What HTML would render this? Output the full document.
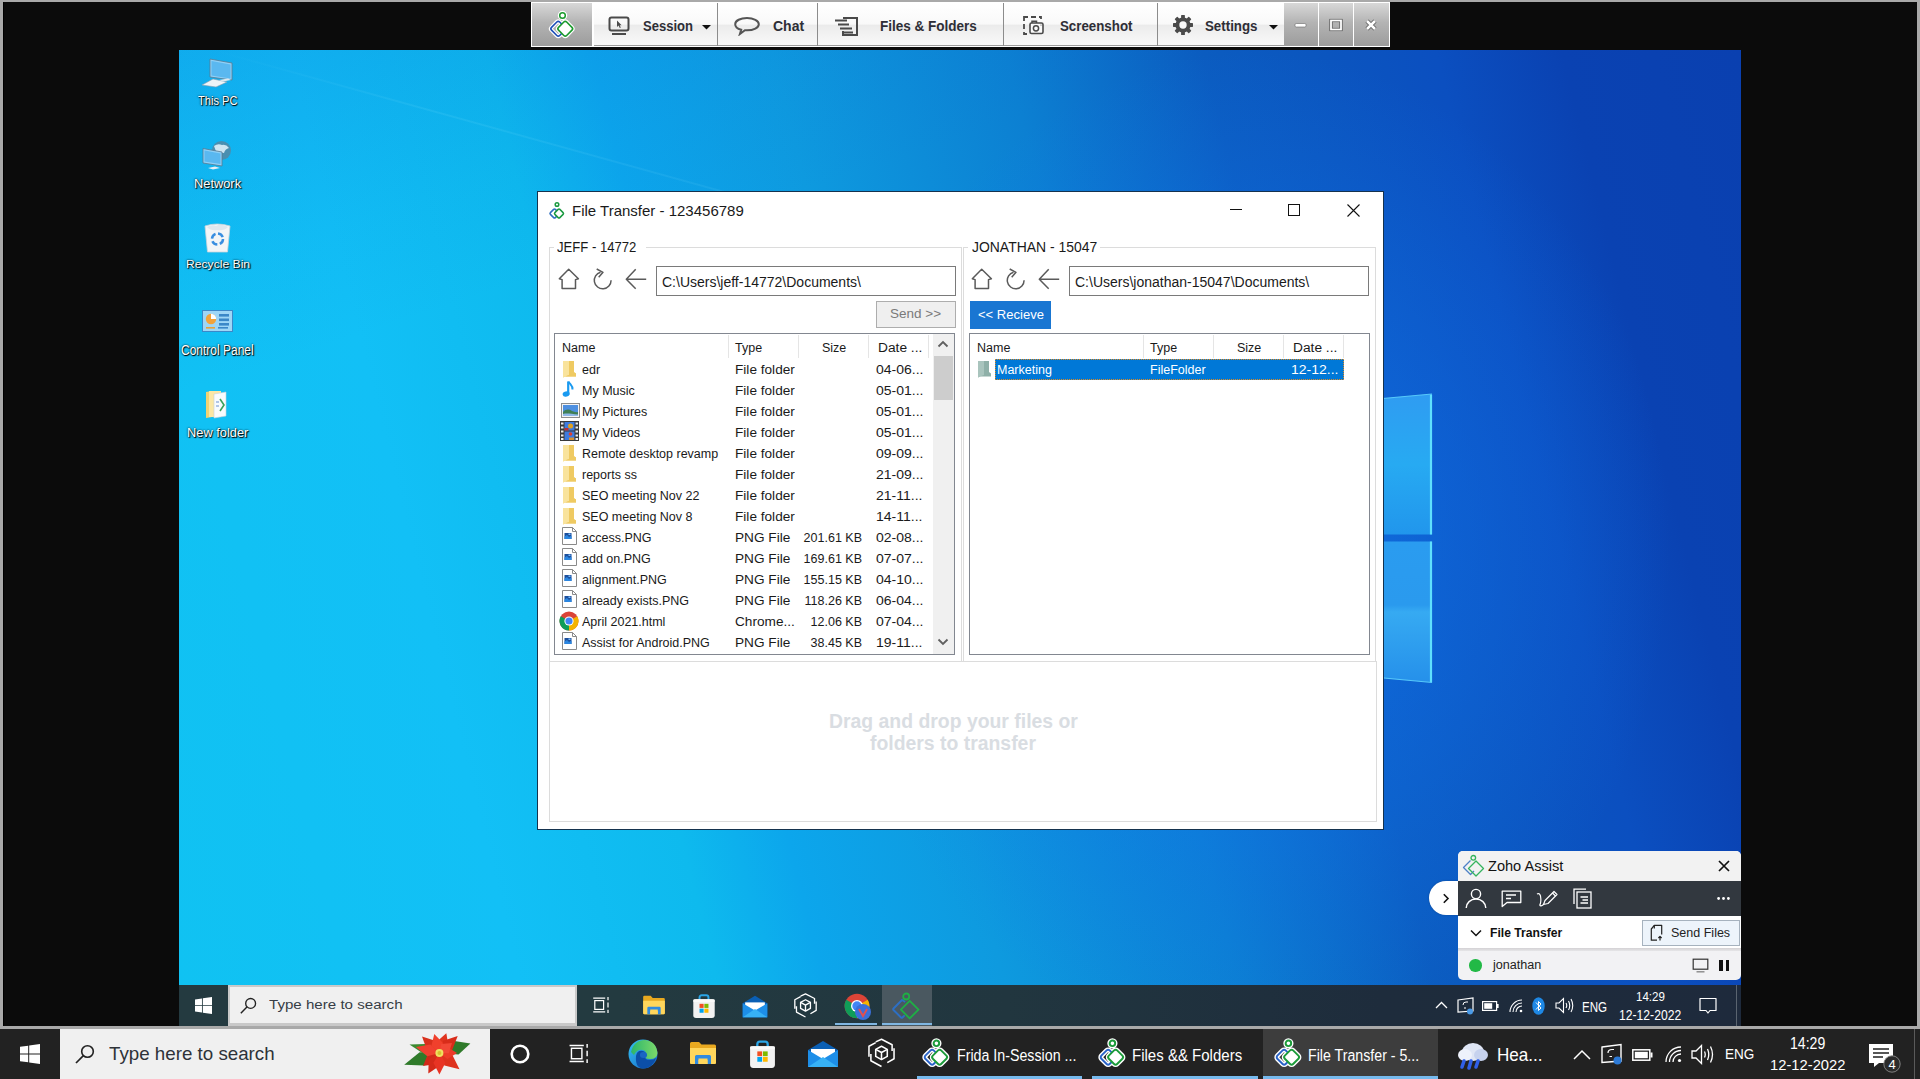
<!DOCTYPE html>
<html><head><meta charset="utf-8">
<style>
*{margin:0;padding:0;box-sizing:border-box}
html,body{width:1920px;height:1079px;overflow:hidden;background:#0b0b0b;font-family:"Liberation Sans",sans-serif}
.a{position:absolute}
.t{position:absolute;white-space:nowrap;line-height:1}
#frameT{left:0;top:0;width:1920px;height:2px;background:#a9a9a9}
#frameL{left:0;top:0;width:3px;height:1029px;background:#a9a9a9}
#frameR{left:1917px;top:0;width:3px;height:1029px;background:#a9a9a9}
#frameB{left:0;top:1026px;width:1920px;height:3px;background:#a9a9a9}
#desk{left:179px;top:50px;width:1562px;height:935px;overflow:hidden;
 background:linear-gradient(76deg,#10c2f2 0%,#12c0f6 19%,#0ebaee 30%,#0ca6ec 36%,#0e9adf 46%,#0c80d2 59%,#0b5cc0 70%,#0b56bf 76%,#0b4fc0 83%,#0a42b2 90%,#0a40b0 100%)}
</style></head>
<body>
<div class="a" id="frameT"></div>
<div class="a" id="frameL"></div>
<div class="a" id="frameR"></div>
<div class="a" style="left:3px;top:2px;width:1px;height:1024px;background:#000"></div>
<div class="a" id="frameB"></div>

<div class="a" id="desk">
<!--DESK-->
<!-- top-left sky darkening above light ray -->
<div class="a" style="left:0;top:0;width:1562px;height:935px;background:linear-gradient(162deg, rgba(12,110,215,0.25) 0%, rgba(12,110,215,0.06) 16%, rgba(12,110,215,0) 24%)"></div>
<!-- light ray -->
<div class="a" style="left:30px;top:-2px;width:760px;height:2px;background:linear-gradient(90deg,rgba(150,235,255,0) 0%,rgba(150,235,255,0.10) 30%,rgba(150,235,255,0.08) 75%,rgba(150,235,255,0) 100%);transform:rotate(15.5deg);transform-origin:0 0"></div>
<!-- logo glow -->
<div class="a" style="left:0;top:0;width:1562px;height:935px;background:radial-gradient(ellipse 420px 500px at 1071px 500px, rgba(22,128,245,0.7) 0%, rgba(18,115,240,0.4) 45%, rgba(14,100,230,0) 100%)"></div>
<!-- windows logo panes (right edges visible) -->
<svg class="a" style="left:970px;top:280px" width="320" height="380" viewBox="0 0 320 380">
 <defs>
  <linearGradient id="pane1" x1="0" y1="0" x2="0" y2="1"><stop offset="0" stop-color="#2f9cf2"/><stop offset="0.5" stop-color="#27aaf2"/><stop offset="1" stop-color="#2196ec"/></linearGradient>
  <linearGradient id="pane2" x1="0" y1="0" x2="0" y2="1"><stop offset="0" stop-color="#2a9cf0"/><stop offset="0.45" stop-color="#2a9aee"/><stop offset="0.5" stop-color="#36aaf2"/><stop offset="1" stop-color="#2590ea"/></linearGradient>
 </defs>
 <path d="M0 90L283 64V204.5H0Z" fill="url(#pane1)"/>
 <path d="M0 211.5H283V352.5L0 326Z" fill="url(#pane2)"/>
 <path d="M282 64.5V204.5M282 211.5V352.5" stroke="#5fe0fd" stroke-width="2.2"/>
 <path d="M0 90L283 64" stroke="#56c8fa" stroke-width="1.2"/>
 <path d="M0 326L283 352.5" stroke="#56c8fa" stroke-width="1.2"/>
</svg>
<!-- desktop icons -->
<svg class="a" style="left:22px;top:8px" width="33" height="30" viewBox="0 0 33 30">
 <path d="M9 1L31 5V22L9 19Z" fill="#8fd0f7" stroke="#5a7a90" stroke-width="0.8"/>
 <path d="M10.5 3L29.5 6.5V20.5L10.5 17.5Z" fill="#5ab8f0"/>
 <path d="M1 27L12 21L26 24L15 29Z" fill="#eef4f8" stroke="#8aa0b0" stroke-width="0.6"/>
 <path d="M18 22L27 20.5L30 22L22 23.5Z" fill="#dde8ef"/>
</svg>
<div class="t" id="dpc" style="left:18.5px;top:44.6px;font-size:12.51px;color:#fff;text-shadow:0 0 2px #000,1px 1px 1px #000;transform:scaleX(0.888);transform-origin:0 0">This PC</div>
<svg class="a" style="left:23px;top:90px" width="30" height="30" viewBox="0 0 30 30">
 <circle cx="19.5" cy="10.5" r="9.5" fill="#4a8fb0"/><path d="M12 6Q16 3 20 5Q24 4 27 8Q23 9 22 13Q18 12 15 14Z" fill="#cfe6f2"/>
 <path d="M1 8.5L20 12V26L1 23Z" fill="#8fd0f7" stroke="#5a7a90" stroke-width="0.8"/><path d="M2.5 10.5L18.5 13.5V24L2.5 21.5Z" fill="#5ab8f0"/>
 <path d="M6 28L13 26.5L18 28L11 29.5Z" fill="#e6eef3"/>
</svg>
<div class="t" id="dnet" style="left:15.0px;top:127.8px;font-size:12.31px;color:#fff;text-shadow:0 0 2px #000,1px 1px 1px #000;transform:scaleX(1.043);transform-origin:0 0">Network</div>
<svg class="a" style="left:25px;top:172px" width="27" height="31" viewBox="0 0 27 31">
 <path d="M1 4Q13 0 26 4L23.5 30H3.5Z" fill="#f3f5f7" stroke="#c9d3da" stroke-width="0.8"/>
 <path d="M3 5Q8 2 12 4Q17 1 24 5Q20 9 13 8Q7 9 3 5Z" fill="#dfe7ee"/>
 <circle cx="13.5" cy="17" r="5.5" fill="none" stroke="#3a8ee0" stroke-width="2.5" stroke-dasharray="6 2.6"/>
</svg>
<div class="t" id="drb" style="left:7.3px;top:209.4px;font-size:11.15px;color:#fff;text-shadow:0 0 2px #000,1px 1px 1px #000;transform:scaleX(1.09);transform-origin:0 0">Recycle Bin</div>
<svg class="a" style="left:23px;top:260px" width="31" height="22" viewBox="0 0 31 22">
 <rect x="0.5" y="0.5" width="30" height="21" fill="#9ed6f6" stroke="#3b88c8" stroke-width="1"/>
 <circle cx="9" cy="9" r="5.2" fill="#f2a33a"/><path d="M9 9V3.8A5.2 5.2 0 0 1 14.2 9Z" fill="#fff"/>
 <rect x="17" y="4" width="10" height="2.6" fill="#3b88c8"/><rect x="17" y="8.5" width="10" height="2.6" fill="#3b88c8"/><rect x="17" y="13" width="10" height="2.6" fill="#3b88c8"/>
 <rect x="4" y="17" width="9" height="1.6" fill="#e7a23a"/><rect x="16" y="17" width="10" height="1.6" fill="#3b88c8"/>
</svg>
<div class="t" id="dcp" style="left:1.8px;top:294.0px;font-size:13.95px;color:#fff;text-shadow:0 0 2px #000,1px 1px 1px #000;transform:scaleX(0.861);transform-origin:0 0">Control Panel</div>
<svg class="a" style="left:26px;top:340px" width="24" height="29" viewBox="0 0 24 29">
 <path d="M1 2L7 1V27L1 28Z" fill="#f2d373"/><path d="M4 1H16V27H4Z" fill="#fbe7a4"/>
 <path d="M9 4L21 2V26L9 28Z" fill="#f8fbfd" stroke="#c8d0d8" stroke-width="0.6"/>
 <path d="M15 9L19 15L15 21" fill="none" stroke="#3aa05a" stroke-width="1.6"/><path d="M11 12H14M11 16H14" stroke="#6a8fd0" stroke-width="1"/>
</svg>
<div class="t" id="dnf" style="left:7.5px;top:375.6px;font-size:13.52px;color:#fff;text-shadow:0 0 2px #000,1px 1px 1px #000;transform:scaleX(0.949);transform-origin:0 0">New folder</div>
<!--/DESK-->
</div>


<div class="a" style="left:531px;top:2px;width:859px;height:45px;background:#fff"></div>
<div class="a" style="left:532px;top:3px;width:60px;height:43px;background:linear-gradient(180deg,#d8d8d8 0%,#b4b4b4 45%,#9c9c9c 100%)"></div>
<div class="a" style="left:594px;top:3px;width:690px;height:43px;border-bottom:1px solid #9c9c9c;background:linear-gradient(180deg,#ffffff 0%,#f9f9f9 50%,#ebebeb 53%,#f2f2f2 75%,#f8f8f8 100%)"></div>
<div class="a" style="left:717px;top:3px;width:1px;height:43px;background:#8c8c8c"></div>
<div class="a" style="left:817px;top:3px;width:1px;height:43px;background:#8c8c8c"></div>
<div class="a" style="left:1003px;top:3px;width:1px;height:43px;background:#8c8c8c"></div>
<div class="a" style="left:1157px;top:3px;width:1px;height:43px;background:#8c8c8c"></div>
<div class="a" style="left:1284px;top:3px;width:34px;height:43px;background:linear-gradient(180deg,#d8d8d8 0%,#b4b4b4 45%,#9c9c9c 100%)"></div>
<div class="a" style="left:1319px;top:3px;width:34px;height:43px;background:linear-gradient(180deg,#d8d8d8 0%,#b4b4b4 45%,#9c9c9c 100%)"></div>
<div class="a" style="left:1354px;top:3px;width:35px;height:43px;background:linear-gradient(180deg,#d8d8d8 0%,#b4b4b4 45%,#9c9c9c 100%)"></div>
<!-- logo -->
<svg class="a" style="left:548px;top:9px" width="30" height="32" viewBox="0 0 30 32">
 <g fill="none" stroke-linejoin="round">
  <rect x="4.5" y="14" width="11.5" height="11.5" rx="2" transform="rotate(45 10.25 19.75)" stroke="#fff" stroke-width="4"/>
  <rect x="11.5" y="14" width="11.5" height="11.5" rx="2" transform="rotate(45 17.25 19.75)" stroke="#fff" stroke-width="4"/>
  <circle cx="14.5" cy="6.5" r="3" stroke="#fff" stroke-width="3.5"/>
  <rect x="4.5" y="14" width="11.5" height="11.5" rx="2" transform="rotate(45 10.25 19.75)" stroke="#1d4fb8" stroke-width="1.6"/>
  <rect x="11.5" y="14" width="11.5" height="11.5" rx="2" transform="rotate(45 17.25 19.75)" fill="#fff" stroke="#1a9a2c" stroke-width="1.6"/>
  <circle cx="14.5" cy="6.5" r="2.8" fill="#fff" stroke="#1a9a2c" stroke-width="1.5"/>
 </g>
</svg>
<!-- session icon -->
<svg class="a" style="left:608px;top:16px" width="24" height="20" viewBox="0 0 24 20">
 <rect x="1.5" y="1.5" width="19" height="13" rx="2" fill="none" stroke="#4a4a4a" stroke-width="2"/>
 <rect x="4" y="17" width="14" height="2" fill="#4a4a4a"/>
 <path d="M9 4.5 L9 11 L10.6 9.6 L11.8 12 L12.8 11.5 L11.7 9.2 L13.6 9.2 Z" fill="#4a4a4a"/>
</svg>
<div class="t" style="left:643px;top:19px;font-size:14px;font-weight:bold;color:#2e2e36;transform:scaleX(0.93);transform-origin:0 0">Session</div>
<svg class="a" style="left:702px;top:25px" width="9" height="5" viewBox="0 0 9 5"><path d="M0 0H9L4.5 4.5Z" fill="#111"/></svg>
<!-- chat icon -->
<svg class="a" style="left:733px;top:16px" width="28" height="20" viewBox="0 0 28 20">
 <path d="M14 2C7.5 2 2.2 4.6 2.2 8.2c0 2.6 2.6 4.6 6 5.5l-1.3 4.3 5-3.8c0.7 0.1 1.4 0.1 2.1 0.1 6.5 0 11.8-2.6 11.8-6.1S20.5 2 14 2z" fill="none" stroke="#555" stroke-width="2"/>
</svg>
<div class="t" style="left:773px;top:19px;font-size:14px;font-weight:bold;color:#2e2e36">Chat</div>
<!-- files icon -->
<svg class="a" style="left:834px;top:16px" width="26" height="20" viewBox="0 0 26 20">
 <path d="M9 2H23V19H9V15" fill="none" stroke="#4a4a4a" stroke-width="2"/>
 <path d="M1 4.5H13M4 8.5H15M6 12.5H18M9 16.5H19" stroke="#4a4a4a" stroke-width="1.8"/>
</svg>
<div class="t" style="left:880px;top:19px;font-size:14px;font-weight:bold;color:#2e2e36;transform:scaleX(0.965);transform-origin:0 0">Files &amp; Folders</div>
<!-- screenshot icon -->
<svg class="a" style="left:1023px;top:16px" width="22" height="20" viewBox="0 0 22 20">
 <path d="M1 5V1H5M8 1H13M16 1H18V3M1 8V13M1 16V18H4" fill="none" stroke="#4a4a4a" stroke-width="1.8"/>
 <rect x="7" y="7" width="13" height="10.5" rx="1.5" fill="#fafafa" stroke="#4a4a4a" stroke-width="1.6"/>
 <path d="M9 7V5.2H13.5V7" fill="none" stroke="#4a4a4a" stroke-width="1.5"/>
 <circle cx="13" cy="12.3" r="2.6" fill="none" stroke="#4a4a4a" stroke-width="1.5"/>
 <circle cx="18" cy="9" r="0.6" fill="#4a4a4a"/>
</svg>
<div class="t" style="left:1060px;top:19px;font-size:14px;font-weight:bold;color:#2e2e36;transform:scaleX(0.95);transform-origin:0 0">Screenshot</div>
<!-- gear -->
<svg class="a" style="left:1172px;top:14px" width="22" height="22" viewBox="0 0 22 22">
 <g transform="translate(11 11)" fill="#4a4a4a">
  <circle r="7.6"/>
  <g id="teeth"><rect x="-1.9" y="-10" width="3.8" height="4" rx="0.6"/></g>
  <use href="#teeth" transform="rotate(45)"/><use href="#teeth" transform="rotate(90)"/><use href="#teeth" transform="rotate(135)"/>
  <use href="#teeth" transform="rotate(180)"/><use href="#teeth" transform="rotate(225)"/><use href="#teeth" transform="rotate(270)"/><use href="#teeth" transform="rotate(315)"/>
  <circle r="3.7" fill="#f8f8f8"/>
 </g>
</svg>
<div class="t" style="left:1205px;top:19px;font-size:14px;font-weight:bold;color:#2e2e36;transform:scaleX(0.95);transform-origin:0 0">Settings</div>
<svg class="a" style="left:1268.5px;top:24.5px" width="9" height="5" viewBox="0 0 9 5"><path d="M0 0H9L4.5 4.5Z" fill="#111"/></svg>
<!-- min/max/close -->
<svg class="a" style="left:1284px;top:3px" width="105" height="42" viewBox="0 0 105 42">
 <rect x="11" y="20.5" width="11" height="3.5" rx="1.2" fill="#fff" stroke="#666" stroke-width="0.6"/>
 <rect x="47" y="17.5" width="10" height="9" fill="none" stroke="#555" stroke-width="3.2"/>
 <rect x="47" y="17.5" width="10" height="9" fill="none" stroke="#fff" stroke-width="1.8"/>
 <path d="M83 18L91 26M91 18L83 26" stroke="#555" stroke-width="4.2"/>
 <path d="M83 18L91 26M91 18L83 26" stroke="#fff" stroke-width="2.6"/>
</svg>


<!--WINDOW-->
<div class="a" style="left:537px;top:191px;width:847px;height:639px;background:#fff;border:1px solid #15324e"></div>
<!-- title -->
<svg class="a" style="left:548px;top:201px" width="19" height="19" viewBox="0 0 19 19">
 <g fill="none" stroke-width="1.5">
  <rect x="3" y="9" width="7" height="7" rx="1.2" transform="rotate(45 6.5 12.5)" stroke="#2f6fc0"/>
  <rect x="7.5" y="9" width="7" height="7" rx="1.2" transform="rotate(45 11 12.5)" stroke="#1a9a40" fill="#fff"/>
  <circle cx="9" cy="3.5" r="1.8" stroke="#1a9a40"/>
 </g>
</svg>
<div class="t" style="left:572px;top:203px;font-size:15px;color:#1a1a1a">File Transfer - 123456789</div>
<div class="a" style="left:1230px;top:209px;width:12px;height:1px;background:#111"></div>
<div class="a" style="left:1288px;top:204px;width:12px;height:12px;border:1px solid #111"></div>
<svg class="a" style="left:1347px;top:204px" width="13" height="13" viewBox="0 0 13 13"><path d="M0.5 0.5L12.5 12.5M12.5 0.5L0.5 12.5" stroke="#111" stroke-width="1.1"/></svg>
<!-- group boxes -->
<div class="a" style="left:549px;top:247px;width:413px;height:415px;border:1px solid #dcdcdc"></div>
<div class="a" style="left:963px;top:247px;width:413px;height:415px;border:1px solid #dcdcdc"></div>
<div class="a" style="left:549px;top:661px;width:828px;height:161px;border:1px solid #dcdcdc"></div>
<div class="a" style="left:554px;top:240px;width:92px;height:14px;background:#fff"></div>
<div class="a" style="left:968px;top:240px;width:132px;height:14px;background:#fff"></div>
<div class="t" style="left:556.5px;top:241px;font-size:13.8px;color:#1a1a1a;transform:scaleX(0.95);transform-origin:0 0">JEFF - 14772</div>
<div class="t" style="left:972px;top:241px;font-size:13.8px;color:#1a1a1a;transform:scaleX(1.01);transform-origin:0 0">JONATHAN - 15047</div>


<svg class="a" style="left:555px;top:264px" width="95" height="30" viewBox="0 0 95 30"><g fill="none" stroke="#5a5a5a" stroke-width="1.5" stroke-linejoin="round"><path d="M7.1 24.6V15.6L4.3 14.7L13.7 5.3L23.4 14.7L20.5 15.6V24.6Z"/><path d="M56.1 16.3A8.4 8.4 0 1 1 45.5 8.2"/><path d="M41.7 5L48 8.3L43.7 13.3"/><path d="M80.7 5.2L71.3 15.2L80.7 24.7M71.5 15.2H91.2"/></g></svg>

<svg class="a" style="left:968px;top:264px" width="95" height="30" viewBox="0 0 95 30"><g fill="none" stroke="#5a5a5a" stroke-width="1.5" stroke-linejoin="round"><path d="M7.1 24.6V15.6L4.3 14.7L13.7 5.3L23.4 14.7L20.5 15.6V24.6Z"/><path d="M56.1 16.3A8.4 8.4 0 1 1 45.5 8.2"/><path d="M41.7 5L48 8.3L43.7 13.3"/><path d="M80.7 5.2L71.3 15.2L80.7 24.7M71.5 15.2H91.2"/></g></svg>

<div class="a" style="left:656px;top:266px;width:300px;height:30px;border:1px solid #7a7a7a;background:#fff"></div>
<div class="t" style="left:662px;top:275px;font-size:14px;color:#1a1a1a">C:\Users\jeff-14772\Documents\</div>
<div class="a" style="left:1069px;top:266px;width:300px;height:30px;border:1px solid #7a7a7a;background:#fff"></div>
<div class="t" style="left:1075px;top:275px;font-size:14px;color:#1a1a1a">C:\Users\jonathan-15047\Documents\</div>
<div class="a" style="left:876px;top:301px;width:80px;height:27px;border:1px solid #adadad;background:#efefef"></div>
<div class="t" style="left:890px;top:307px;font-size:13.5px;color:#7a7a7a">Send &gt;&gt;</div>
<div class="a" style="left:970px;top:301px;width:81px;height:28px;background:#1976d2"></div>
<div class="t" style="left:978px;top:307.5px;font-size:13.5px;color:#fff;transform:scaleX(0.965);transform-origin:0 0">&lt;&lt; Recieve</div>
<!-- list boxes -->
<div class="a" style="left:554px;top:333px;width:401px;height:322px;border:1px solid #828790;background:#fff"></div>
<div class="a" style="left:969px;top:333px;width:401px;height:322px;border:1px solid #828790;background:#fff"></div>

<div class="a" style="left:728px;top:335px;width:1px;height:23px;background:#e5e5e5"></div>
<div class="a" style="left:798px;top:335px;width:1px;height:23px;background:#e5e5e5"></div>
<div class="a" style="left:868px;top:335px;width:1px;height:23px;background:#e5e5e5"></div>
<div class="a" style="left:928px;top:335px;width:1px;height:23px;background:#e5e5e5"></div>
<div class="t" style="left:562px;top:342px;font-size:12.5px;color:#1a1a1a">Name</div>
<div class="t" style="left:735px;top:342px;font-size:12.5px;color:#1a1a1a">Type</div>
<div class="t" style="left:822px;top:342px;font-size:12.5px;color:#1a1a1a">Size</div>
<div class="t" style="left:877.5px;top:342px;font-size:12.5px;color:#1a1a1a;transform:scaleX(1.1);transform-origin:0 0">Date ...</div>

<div class="a" style="left:1143px;top:335px;width:1px;height:23px;background:#e5e5e5"></div>
<div class="a" style="left:1213px;top:335px;width:1px;height:23px;background:#e5e5e5"></div>
<div class="a" style="left:1283px;top:335px;width:1px;height:23px;background:#e5e5e5"></div>
<div class="a" style="left:1343px;top:335px;width:1px;height:23px;background:#e5e5e5"></div>
<div class="t" style="left:977px;top:342px;font-size:12.5px;color:#1a1a1a">Name</div>
<div class="t" style="left:1150px;top:342px;font-size:12.5px;color:#1a1a1a">Type</div>
<div class="t" style="left:1237px;top:342px;font-size:12.5px;color:#1a1a1a">Size</div>
<div class="t" style="left:1292.5px;top:342px;font-size:12.5px;color:#1a1a1a;transform:scaleX(1.1);transform-origin:0 0">Date ...</div>


<div class="a" style="left:933px;top:334px;width:21px;height:320px;background:#f0f0f0"></div>
<div class="a" style="left:934px;top:356px;width:19px;height:44px;background:#cdcdcd"></div>
<svg class="a" style="left:937px;top:340px" width="12" height="8" viewBox="0 0 12 8"><path d="M1.5 6.5L6 2L10.5 6.5" fill="none" stroke="#606060" stroke-width="1.8"/></svg>
<svg class="a" style="left:937px;top:638px" width="12" height="8" viewBox="0 0 12 8"><path d="M1.5 1.5L6 6L10.5 1.5" fill="none" stroke="#606060" stroke-width="1.8"/></svg>

<svg class="a" style="left:562px;top:360px" width="14" height="18" viewBox="0 0 14 18"><path d="M1 1H12V12L14 13.5V16.5H3L1 17.5Z" fill="#f2cf6e"/><path d="M1 1H7L7 15L3 16.5L1 17.5Z" fill="#f9e39c"/><path d="M7 1H12V12.5L14 13.5V16.5H3L7 15Z" fill="#efca62"/></svg>
<div class="t" style="left:582px;top:364px;font-size:12.5px;color:#1a1a1a">edr</div>
<div class="t" style="left:735px;top:364px;font-size:12.5px;color:#1a1a1a;transform:scaleX(1.09);transform-origin:0 0">File folder</div>
<div class="t" style="left:876px;top:364px;font-size:12.5px;color:#1a1a1a;transform:scaleX(1.12);transform-origin:0 0">04-06...</div>
<svg class="a" style="left:562px;top:380px" width="14" height="18" viewBox="0 0 14 18"><path d="M6.2 1.5V13" stroke="#1a9af0" stroke-width="2.2"/><ellipse cx="4.2" cy="14" rx="3.6" ry="2.6" fill="#1a9af0" transform="rotate(-15 4.2 14)"/><path d="M6.5 1.5C7.5 4 11 5.5 10.5 9.5" fill="none" stroke="#1a9af0" stroke-width="2"/></svg>
<div class="t" style="left:582px;top:385px;font-size:12.5px;color:#1a1a1a">My Music</div>
<div class="t" style="left:735px;top:385px;font-size:12.5px;color:#1a1a1a;transform:scaleX(1.09);transform-origin:0 0">File folder</div>
<div class="t" style="left:876px;top:385px;font-size:12.5px;color:#1a1a1a;transform:scaleX(1.12);transform-origin:0 0">05-01...</div>
<svg class="a" style="left:561px;top:403px" width="19" height="16" viewBox="0 0 19 16"><rect x="0.5" y="0.5" width="18" height="14" fill="#f4f4f4" stroke="#8d8d8d"/><rect x="2" y="2" width="15" height="11" fill="#4d8fe0"/><path d="M2 9C5 6 8 6 11 8C13 9 15 9.5 17 9V13H2Z" fill="#3f7f55"/><path d="M2 11C6 10 10 11 17 11.5V13H2Z" fill="#8fb8e8"/></svg>
<div class="t" style="left:582px;top:406px;font-size:12.5px;color:#1a1a1a">My Pictures</div>
<div class="t" style="left:735px;top:406px;font-size:12.5px;color:#1a1a1a;transform:scaleX(1.09);transform-origin:0 0">File folder</div>
<div class="t" style="left:876px;top:406px;font-size:12.5px;color:#1a1a1a;transform:scaleX(1.12);transform-origin:0 0">05-01...</div>
<svg class="a" style="left:560px;top:421px" width="19" height="20" viewBox="0 0 19 20"><rect x="0" y="0" width="19" height="20" fill="#3a3a3a"/><g fill="#eee"><rect x="1" y="1.5" width="2.5" height="2"/><rect x="1" y="5.5" width="2.5" height="2"/><rect x="1" y="9.5" width="2.5" height="2"/><rect x="1" y="13.5" width="2.5" height="2"/><rect x="1" y="17" width="2.5" height="2"/><rect x="15.5" y="1.5" width="2.5" height="2"/><rect x="15.5" y="5.5" width="2.5" height="2"/><rect x="15.5" y="9.5" width="2.5" height="2"/><rect x="15.5" y="13.5" width="2.5" height="2"/><rect x="15.5" y="17" width="2.5" height="2"/></g><rect x="4.5" y="1" width="10" height="8.5" fill="#3d7be0"/><rect x="4.5" y="10.5" width="10" height="8.5" fill="#3d7be0"/><circle cx="10.5" cy="5" r="2.5" fill="#e0a020"/><circle cx="10.5" cy="13" r="1.8" fill="#e04030"/><rect x="4.5" y="7" width="4" height="2.5" fill="#c03030"/><rect x="9" y="16.5" width="5" height="2.5" fill="#d89030"/></svg>
<div class="t" style="left:582px;top:427px;font-size:12.5px;color:#1a1a1a">My Videos</div>
<div class="t" style="left:735px;top:427px;font-size:12.5px;color:#1a1a1a;transform:scaleX(1.09);transform-origin:0 0">File folder</div>
<div class="t" style="left:876px;top:427px;font-size:12.5px;color:#1a1a1a;transform:scaleX(1.12);transform-origin:0 0">05-01...</div>
<svg class="a" style="left:562px;top:444px" width="14" height="18" viewBox="0 0 14 18"><path d="M1 1H12V12L14 13.5V16.5H3L1 17.5Z" fill="#f2cf6e"/><path d="M1 1H7L7 15L3 16.5L1 17.5Z" fill="#f9e39c"/><path d="M7 1H12V12.5L14 13.5V16.5H3L7 15Z" fill="#efca62"/></svg>
<div class="t" style="left:582px;top:448px;font-size:12.5px;color:#1a1a1a">Remote desktop revamp</div>
<div class="t" style="left:735px;top:448px;font-size:12.5px;color:#1a1a1a;transform:scaleX(1.09);transform-origin:0 0">File folder</div>
<div class="t" style="left:876px;top:448px;font-size:12.5px;color:#1a1a1a;transform:scaleX(1.12);transform-origin:0 0">09-09...</div>
<svg class="a" style="left:562px;top:465px" width="14" height="18" viewBox="0 0 14 18"><path d="M1 1H12V12L14 13.5V16.5H3L1 17.5Z" fill="#f2cf6e"/><path d="M1 1H7L7 15L3 16.5L1 17.5Z" fill="#f9e39c"/><path d="M7 1H12V12.5L14 13.5V16.5H3L7 15Z" fill="#efca62"/></svg>
<div class="t" style="left:582px;top:469px;font-size:12.5px;color:#1a1a1a">reports ss</div>
<div class="t" style="left:735px;top:469px;font-size:12.5px;color:#1a1a1a;transform:scaleX(1.09);transform-origin:0 0">File folder</div>
<div class="t" style="left:876px;top:469px;font-size:12.5px;color:#1a1a1a;transform:scaleX(1.12);transform-origin:0 0">21-09...</div>
<svg class="a" style="left:562px;top:486px" width="14" height="18" viewBox="0 0 14 18"><path d="M1 1H12V12L14 13.5V16.5H3L1 17.5Z" fill="#f2cf6e"/><path d="M1 1H7L7 15L3 16.5L1 17.5Z" fill="#f9e39c"/><path d="M7 1H12V12.5L14 13.5V16.5H3L7 15Z" fill="#efca62"/></svg>
<div class="t" style="left:582px;top:490px;font-size:12.5px;color:#1a1a1a">SEO meeting Nov 22</div>
<div class="t" style="left:735px;top:490px;font-size:12.5px;color:#1a1a1a;transform:scaleX(1.09);transform-origin:0 0">File folder</div>
<div class="t" style="left:876px;top:490px;font-size:12.5px;color:#1a1a1a;transform:scaleX(1.12);transform-origin:0 0">21-11...</div>
<svg class="a" style="left:562px;top:507px" width="14" height="18" viewBox="0 0 14 18"><path d="M1 1H12V12L14 13.5V16.5H3L1 17.5Z" fill="#f2cf6e"/><path d="M1 1H7L7 15L3 16.5L1 17.5Z" fill="#f9e39c"/><path d="M7 1H12V12.5L14 13.5V16.5H3L7 15Z" fill="#efca62"/></svg>
<div class="t" style="left:582px;top:511px;font-size:12.5px;color:#1a1a1a">SEO meeting Nov 8</div>
<div class="t" style="left:735px;top:511px;font-size:12.5px;color:#1a1a1a;transform:scaleX(1.09);transform-origin:0 0">File folder</div>
<div class="t" style="left:876px;top:511px;font-size:12.5px;color:#1a1a1a;transform:scaleX(1.12);transform-origin:0 0">14-11...</div>
<svg class="a" style="left:562px;top:527px" width="15" height="18" viewBox="0 0 15 18"><path d="M0.5 0.5H10.5L14.5 4.5V17.5H0.5Z" fill="#fff" stroke="#8a8a8a"/><path d="M10.5 0.5V4.5H14.5" fill="none" stroke="#8a8a8a"/><rect x="2.5" y="6" width="7" height="6" fill="#1c4f9c"/><path d="M2.5 12V9.5L5 8L7 10L9.5 8.5V12Z" fill="#2b86e0"/><rect x="6.5" y="6.5" width="2" height="1.5" fill="#7fc0ff"/></svg>
<div class="t" style="left:582px;top:532px;font-size:12.5px;color:#1a1a1a">access.PNG</div>
<div class="t" style="left:735px;top:532px;font-size:12.5px;color:#1a1a1a;transform:scaleX(1.09);transform-origin:0 0">PNG File</div>
<div class="t" style="left:792px;width:70px;text-align:right;top:532px;font-size:12.5px;color:#1a1a1a">201.61 KB</div>
<div class="t" style="left:876px;top:532px;font-size:12.5px;color:#1a1a1a;transform:scaleX(1.12);transform-origin:0 0">02-08...</div>
<svg class="a" style="left:562px;top:548px" width="15" height="18" viewBox="0 0 15 18"><path d="M0.5 0.5H10.5L14.5 4.5V17.5H0.5Z" fill="#fff" stroke="#8a8a8a"/><path d="M10.5 0.5V4.5H14.5" fill="none" stroke="#8a8a8a"/><rect x="2.5" y="6" width="7" height="6" fill="#1c4f9c"/><path d="M2.5 12V9.5L5 8L7 10L9.5 8.5V12Z" fill="#2b86e0"/><rect x="6.5" y="6.5" width="2" height="1.5" fill="#7fc0ff"/></svg>
<div class="t" style="left:582px;top:553px;font-size:12.5px;color:#1a1a1a">add on.PNG</div>
<div class="t" style="left:735px;top:553px;font-size:12.5px;color:#1a1a1a;transform:scaleX(1.09);transform-origin:0 0">PNG File</div>
<div class="t" style="left:792px;width:70px;text-align:right;top:553px;font-size:12.5px;color:#1a1a1a">169.61 KB</div>
<div class="t" style="left:876px;top:553px;font-size:12.5px;color:#1a1a1a;transform:scaleX(1.12);transform-origin:0 0">07-07...</div>
<svg class="a" style="left:562px;top:569px" width="15" height="18" viewBox="0 0 15 18"><path d="M0.5 0.5H10.5L14.5 4.5V17.5H0.5Z" fill="#fff" stroke="#8a8a8a"/><path d="M10.5 0.5V4.5H14.5" fill="none" stroke="#8a8a8a"/><rect x="2.5" y="6" width="7" height="6" fill="#1c4f9c"/><path d="M2.5 12V9.5L5 8L7 10L9.5 8.5V12Z" fill="#2b86e0"/><rect x="6.5" y="6.5" width="2" height="1.5" fill="#7fc0ff"/></svg>
<div class="t" style="left:582px;top:574px;font-size:12.5px;color:#1a1a1a">alignment.PNG</div>
<div class="t" style="left:735px;top:574px;font-size:12.5px;color:#1a1a1a;transform:scaleX(1.09);transform-origin:0 0">PNG File</div>
<div class="t" style="left:792px;width:70px;text-align:right;top:574px;font-size:12.5px;color:#1a1a1a">155.15 KB</div>
<div class="t" style="left:876px;top:574px;font-size:12.5px;color:#1a1a1a;transform:scaleX(1.12);transform-origin:0 0">04-10...</div>
<svg class="a" style="left:562px;top:590px" width="15" height="18" viewBox="0 0 15 18"><path d="M0.5 0.5H10.5L14.5 4.5V17.5H0.5Z" fill="#fff" stroke="#8a8a8a"/><path d="M10.5 0.5V4.5H14.5" fill="none" stroke="#8a8a8a"/><rect x="2.5" y="6" width="7" height="6" fill="#1c4f9c"/><path d="M2.5 12V9.5L5 8L7 10L9.5 8.5V12Z" fill="#2b86e0"/><rect x="6.5" y="6.5" width="2" height="1.5" fill="#7fc0ff"/></svg>
<div class="t" style="left:582px;top:595px;font-size:12.5px;color:#1a1a1a">already exists.PNG</div>
<div class="t" style="left:735px;top:595px;font-size:12.5px;color:#1a1a1a;transform:scaleX(1.09);transform-origin:0 0">PNG File</div>
<div class="t" style="left:792px;width:70px;text-align:right;top:595px;font-size:12.5px;color:#1a1a1a">118.26 KB</div>
<div class="t" style="left:876px;top:595px;font-size:12.5px;color:#1a1a1a;transform:scaleX(1.12);transform-origin:0 0">06-04...</div>
<svg class="a" style="left:559px;top:611px" width="20" height="20" viewBox="0 0 20 20"><circle cx="10" cy="10" r="9.5" fill="#db4437"/><path d="M10 10L1.77 5.25A9.5 9.5 0 0 0 10 19.5Z" fill="#0f9d58"/><path d="M10 10L18.23 5.25A9.5 9.5 0 0 1 10 19.5Z" fill="#f4b400"/><circle cx="10" cy="10" r="4.6" fill="#fff"/><circle cx="10" cy="10" r="3.6" fill="#4285f4"/></svg>
<div class="t" style="left:582px;top:616px;font-size:12.5px;color:#1a1a1a">April 2021.html</div>
<div class="t" style="left:735px;top:616px;font-size:12.5px;color:#1a1a1a;transform:scaleX(1.09);transform-origin:0 0">Chrome...</div>
<div class="t" style="left:792px;width:70px;text-align:right;top:616px;font-size:12.5px;color:#1a1a1a">12.06 KB</div>
<div class="t" style="left:876px;top:616px;font-size:12.5px;color:#1a1a1a;transform:scaleX(1.12);transform-origin:0 0">07-04...</div>
<svg class="a" style="left:562px;top:632px" width="15" height="18" viewBox="0 0 15 18"><path d="M0.5 0.5H10.5L14.5 4.5V17.5H0.5Z" fill="#fff" stroke="#8a8a8a"/><path d="M10.5 0.5V4.5H14.5" fill="none" stroke="#8a8a8a"/><rect x="2.5" y="6" width="7" height="6" fill="#1c4f9c"/><path d="M2.5 12V9.5L5 8L7 10L9.5 8.5V12Z" fill="#2b86e0"/><rect x="6.5" y="6.5" width="2" height="1.5" fill="#7fc0ff"/></svg>
<div class="t" style="left:582px;top:637px;font-size:12.5px;color:#1a1a1a">Assist for Android.PNG</div>
<div class="t" style="left:735px;top:637px;font-size:12.5px;color:#1a1a1a;transform:scaleX(1.09);transform-origin:0 0">PNG File</div>
<div class="t" style="left:792px;width:70px;text-align:right;top:637px;font-size:12.5px;color:#1a1a1a">38.45 KB</div>
<div class="t" style="left:876px;top:637px;font-size:12.5px;color:#1a1a1a;transform:scaleX(1.12);transform-origin:0 0">19-11...</div>

<div class="a" style="left:995px;top:359px;width:349px;height:21px;background:#0078d7;outline:1px dotted #e08a20;outline-offset:-1px"></div>
<svg class="a" style="left:977px;top:360px" width="14" height="18" viewBox="0 0 14 18"><path d="M1 1H12V12L14 13.5V16.5H3L1 17.5Z" fill="#8fb0a8"/><path d="M1 1H7L7 15L3 16.5L1 17.5Z" fill="#a9c4bd"/></svg>
<div class="t" style="left:997px;top:364px;font-size:12.5px;color:#fff">Marketing</div>
<div class="t" style="left:1150px;top:364px;font-size:12.5px;color:#fff">FileFolder</div>
<div class="t" style="left:1291px;top:364px;font-size:12.5px;color:#fff;transform:scaleX(1.12);transform-origin:0 0">12-12...</div>
<div class="t" style="left:829px;top:712px;font-size:19.4px;font-weight:bold;color:#d9dde2">Drag and drop your files or</div>
<div class="t" style="left:870px;top:734px;font-size:19.4px;font-weight:bold;color:#d9dde2">folders to transfer</div>
<!--/WINDOW-->

<!--PANEL-->
<div class="a" style="left:1429px;top:881px;width:40px;height:34px;background:#fff;border-radius:17px 0 0 17px;box-shadow:0 0 2px rgba(0,0,0,0.25)"></div>
<svg class="a" style="left:1442px;top:893px" width="8" height="11" viewBox="0 0 8 11"><path d="M1.8 1.2L6 5.5L1.8 9.8" fill="none" stroke="#111" stroke-width="1.6"/></svg>
<div class="a" style="left:1458px;top:851px;width:283px;height:129px;border-radius:5px;overflow:hidden;background:#f2f2f4">
 <div class="a" style="left:0;top:0;width:283px;height:30px;background:#f2f2f2"></div>
 <div class="a" style="left:0;top:30px;width:283px;height:35px;background:#32383f"></div>
 <div class="a" style="left:0;top:65px;width:283px;height:32px;background:#fff"></div>
 <div class="a" style="left:0;top:97px;width:283px;height:3px;background:linear-gradient(180deg,#d3d1d4,#e6e6e8)"></div>
</div>
<svg class="a" style="left:1460px;top:853px" width="28" height="26" viewBox="0 0 28 26"><g fill="none" stroke-linejoin="round" stroke-width="1.3"><path d="M10.5 7.5L3.5 14.5L10.5 21.5L14 18" stroke="#4d80c6"/><path d="M16 8L23.5 15.5L16 23L8.5 15.5Z" stroke="#35b45e"/><circle cx="13.3" cy="4.8" r="2.3" stroke="#35b45e"/></g></svg>
<div class="t" id="pz" style="left:1487.8px;top:859.0px;font-size:14.0px;color:#111;transform:scaleX(1.041);transform-origin:0 0">Zoho Assist</div>
<svg class="a" style="left:1718px;top:860px" width="12" height="12" viewBox="0 0 12 12"><path d="M1 1L11 11M11 1L1 11" stroke="#111" stroke-width="1.7"/></svg>
<!-- dark bar icons -->
<svg class="a" style="left:1465px;top:888px" width="22" height="21" viewBox="0 0 22 21"><circle cx="11" cy="6" r="4.6" fill="none" stroke="#fff" stroke-width="1.4"/><path d="M1.2 20A9.8 9 0 0 1 20.8 20" fill="none" stroke="#fff" stroke-width="1.4"/></svg>
<svg class="a" style="left:1501px;top:890px" width="22" height="18" viewBox="0 0 22 18"><path d="M1.2 1.2H19.8V12.5H6L1.2 16.5Z" fill="none" stroke="#fff" stroke-width="1.3" stroke-linejoin="round"/><path d="M5 5H15M5 8.5H10" stroke="#fff" stroke-width="1.4"/></svg>
<svg class="a" style="left:1536px;top:890px" width="23" height="18" viewBox="0 0 23 18"><path d="M1 4Q3.5 2.5 4.5 6Q5.5 12 3.8 15Q4.5 17 7.5 14.5" fill="none" stroke="#fff" stroke-width="1.2"/><path d="M7.5 14.5L9 10.5L18 1.5L21 4.5L12 13.5Z" fill="none" stroke="#fff" stroke-width="1.2" stroke-linejoin="round"/><path d="M16.5 3L19.5 6" stroke="#fff" stroke-width="1.2"/></svg>
<svg class="a" style="left:1573px;top:888px" width="19" height="21" viewBox="0 0 19 21"><path d="M1 16V1.2H13" fill="none" stroke="#fff" stroke-width="1.3"/><rect x="4" y="4" width="14" height="16" fill="none" stroke="#fff" stroke-width="1.3"/><path d="M7.5 9H15M9.5 12H15M7.5 15H15" stroke="#fff" stroke-width="1.3"/></svg>
<svg class="a" style="left:1717px;top:896px" width="13" height="5" viewBox="0 0 13 5"><circle cx="1.6" cy="2.5" r="1.4" fill="#fff"/><circle cx="6.5" cy="2.5" r="1.4" fill="#fff"/><circle cx="11.4" cy="2.5" r="1.4" fill="#fff"/></svg>
<!-- file transfer row -->
<svg class="a" style="left:1470px;top:929px" width="12" height="8" viewBox="0 0 12 8"><path d="M1 1.5L6 6.5L11 1.5" fill="none" stroke="#111" stroke-width="1.5"/></svg>
<div class="t" id="pft" style="left:1490.2px;top:926.2px;font-size:13.19px;font-weight:bold;color:#111;transform:scaleX(0.92);transform-origin:0 0">File Transfer</div>
<div class="a" style="left:1642px;top:920px;width:98px;height:26px;background:#edf4fb;border:1px solid #a6b2be"></div>
<svg class="a" style="left:1649px;top:923px" width="16" height="19" viewBox="0 0 16 19"><g fill="none" stroke="#222" stroke-width="1.2" stroke-linejoin="round"><path d="M12.7 11.4V2.3H5.3L2.3 6V17.2H8"/><path d="M5.3 2.3V5.5"/><path d="M11 17.5V14M9.4 15L11 13.4L12.6 15"/></g></svg>
<div class="t" id="psf" style="left:1671.2px;top:927.0px;font-size:12.8px;color:#222;transform:scaleX(0.978);transform-origin:0 0">Send Files</div>
<!-- jonathan row -->
<div class="a" style="left:1469px;top:959px;width:12.5px;height:12.5px;border-radius:50%;background:#22b946"></div>
<div class="t" id="pjo" style="left:1493.2px;top:959.0px;font-size:12.65px;color:#222;transform:scaleX(0.997);transform-origin:0 0">jonathan</div>
<svg class="a" style="left:1692px;top:958px" width="17" height="15" viewBox="0 0 17 15"><rect x="1.2" y="1.2" width="14.6" height="10" fill="none" stroke="#333" stroke-width="1.2"/><path d="M4.5 13.8H12.5" stroke="#888" stroke-width="1.4"/></svg>
<div class="a" style="left:1719px;top:960px;width:3.5px;height:11px;background:#111"></div>
<div class="a" style="left:1725.5px;top:960px;width:3.5px;height:11px;background:#111"></div>
<!--/PANEL-->

<!--RTASKBAR-->
<div class="a" style="left:179px;top:985px;width:1562px;height:41px;background:linear-gradient(90deg,#243a40 0%,#233a40 28%,#21363f 53%,#1e2c3c 77%,#1e2a3c 100%)"></div>
<div class="a" style="left:228px;top:985px;width:349px;height:41px;background:#c9c9c9"></div>
<div class="a" style="left:230px;top:987px;width:345px;height:36px;background:#f0f0f0"></div>
<div class="t" id="rsearch" style="left:269.0px;top:998.0px;font-size:13.7px;color:#363d46;transform:scaleX(1.104);transform-origin:0 0">Type here to search</div>
<div class="a" style="left:882px;top:985px;width:50px;height:41px;background:#4a5860"></div>
<div class="a" style="left:835px;top:1023px;width:42px;height:2px;background:#7fb6e2"></div>
<div class="a" style="left:882px;top:1023px;width:50px;height:2px;background:#7fb6e2"></div>
<div class="a" style="left:1736px;top:985px;width:1px;height:41px;background:#5a6470"></div>

<svg class="a" style="left:195px;top:997px" width="17" height="17" viewBox="0 0 20 20"><path d="M0 2.8L8.2 1.7V9.4H0ZM9.2 1.55L20 0V9.4H9.2ZM0 10.4H8.2V18.3L0 17.2ZM9.2 10.4H20V20L9.2 18.45Z" fill="#fff"/></svg>
<svg class="a" style="left:240px;top:997px" width="17" height="17" viewBox="0 0 20 20"><circle cx="12.5" cy="7.5" r="5.8" fill="none" stroke="#222" stroke-width="1.6"/><path d="M8.4 11.6L1 19" stroke="#222" stroke-width="1.7"/></svg>
<svg class="a" style="left:593px;top:997px" width="18" height="16" viewBox="0 0 22 20"><g fill="none" stroke="#fff" stroke-width="1.5"><path d="M0 1.5H15M0 18.5H15"/><rect x="2" y="4.5" width="11" height="11"/><path d="M18.5 0V4M18.5 7V13M18.5 16V20"/></g></svg>
<svg class="a" style="left:642px;top:995px" width="24" height="20" viewBox="0 0 28 24"><path d="M1 2.5Q1 1 2.5 1H10L12.5 3.5H25.5Q27 3.5 27 5V21.5Q27 23 25.5 23H2.5Q1 23 1 21.5Z" fill="#e9a920"/><path d="M1 7H27V21.5Q27 23 25.5 23H2.5Q1 23 1 21.5Z" fill="#ffd65c"/><path d="M6 23V15.5Q6 14 7.5 14H20.5Q22 14 22 15.5V23H18.5V17.5H9.5V23Z" fill="#2f8ae0"/><rect x="9.5" y="19" width="9" height="4" fill="#ffd65c"/></svg>
<svg class="a" style="left:692px;top:994px" width="24" height="25" viewBox="0 0 26 28"><path d="M8 7V4Q8 1.5 10.5 1.5H15.5Q18 1.5 18 4V7" fill="none" stroke="#2ba6e8" stroke-width="2.2"/><rect x="1" y="6" width="24" height="21" rx="3" fill="#f2f2f2"/><rect x="1" y="6" width="24" height="3" rx="1" fill="#fafafa"/><rect x="8" y="11" width="4.6" height="4.6" fill="#f25022"/><rect x="13.4" y="11" width="4.6" height="4.6" fill="#7fba00"/><rect x="8" y="16.4" width="4.6" height="4.6" fill="#00a4ef"/><rect x="13.4" y="16.4" width="4.6" height="4.6" fill="#ffb900"/></svg>
<svg class="a" style="left:742px;top:995px" width="26" height="23" viewBox="0 0 30 28"><path d="M0 10L15 1L30 10V27H0Z" fill="#0a5fb4"/><path d="M3 9H27V20H3Z" fill="#fff"/><path d="M0 10L15 19L30 10V27H0Z" fill="#1d8ee8"/><path d="M0 27L15 17L30 27Z" fill="#37b1f5"/></svg>
<svg class="a" style="left:794px;top:993px" width="23" height="25" viewBox="0 0 28 30"><g fill="none" stroke="#fff" stroke-width="1.6" stroke-linejoin="round"><path d="M8 3.5L14 0.8L25 6.5V13M27 10V21L20 25M14 29L3 23V16M1 19V8L8 4.2"/><path d="M14 8L20 11.2V18.5L14 21.8L8 18.5V11.2Z"/><path d="M8 11.2L14 14.5L20 11.2M14 14.5V21.8"/></g></svg>
<svg class="a" style="left:844px;top:993px" width="26" height="26" viewBox="0 0 20 20"><circle cx="10" cy="10" r="9.5" fill="#db4437"/><path d="M10 10L1.77 5.25A9.5 9.5 0 0 0 10 19.5Z" fill="#0f9d58"/><path d="M10 10L18.23 5.25A9.5 9.5 0 0 1 10 19.5Z" fill="#f4b400"/><circle cx="10" cy="10" r="4.6" fill="#fff"/><circle cx="10" cy="10" r="3.6" fill="#4285f4"/></svg>
<svg class="a" style="left:854px;top:1003px" width="18" height="18" viewBox="0 0 18 18"><circle cx="9" cy="9" r="8" fill="#3a6fd8"/><path d="M5 6L9 13L13 6" fill="none" stroke="#e05050" stroke-width="2"/></svg>
<svg class="a" style="left:888px;top:990px" width="36" height="36" viewBox="0 0 36 36"><g fill="none" stroke-linejoin="round" stroke-linecap="round"><path d="M16.5 11.5L14 10L5.5 18.5Q4.8 19.2 5.5 20L13 27.5Q13.8 28.2 14.5 27.5L16 26" stroke="#2d6fc4" stroke-width="1.9"/><path d="M21.7 10.8L30.5 19.6L21.7 28.4L12.9 19.6Z" stroke="#1fae45" stroke-width="1.9"/><circle cx="18.2" cy="6.5" r="3" stroke="#1fae45" stroke-width="1.8"/></g></svg>

<svg class="a" style="left:1435px;top:1001px" width="13" height="8" viewBox="0 0 13 8"><path d="M1 7L6.5 1.5L12 7" fill="none" stroke="#fff" stroke-width="1.3"/></svg>
<svg class="a" style="left:1457px;top:997px" width="18" height="18" viewBox="0 0 18 18"><path d="M1 3L16 1V14L1 15Z" fill="none" stroke="#fff" stroke-width="1.2"/><path d="M6 8Q6 5 9 5H11M9 11H7" fill="none" stroke="#fff" stroke-width="1"/><circle cx="13" cy="14.5" r="3" fill="#4a9ae6"/></svg>
<svg class="a" style="left:1482px;top:1001px" width="17" height="10" viewBox="0 0 17 10"><rect x="0.6" y="0.6" width="14" height="8.8" fill="none" stroke="#fff" stroke-width="1.2"/><rect x="2.2" y="2.2" width="8" height="5.6" fill="#fff"/><rect x="15" y="3" width="1.6" height="4" fill="#fff"/></svg>
<svg class="a" style="left:1509px;top:999px" width="15" height="14" viewBox="0 0 15 14"><g fill="none" stroke="#fff" stroke-width="1.1"><path d="M1 13A12 12 0 0 1 13 1"/><path d="M4 13A9 9 0 0 1 13 4"/><path d="M7 13A6 6 0 0 1 13 7"/></g><circle cx="12" cy="12" r="1.3" fill="#fff"/></svg>
<svg class="a" style="left:1532px;top:997px" width="13" height="18" viewBox="0 0 13 18"><ellipse cx="6.5" cy="9" rx="6.2" ry="8.8" fill="#1e88e5"/><path d="M4 5.5L9 11L6.5 13.5V4.5L9 7L4 12.5" fill="none" stroke="#fff" stroke-width="1"/></svg>
<svg class="a" style="left:1555px;top:997px" width="19" height="17" viewBox="0 0 19 17"><path d="M1 6H4L8.5 1.5V15.5L4 11H1Z" fill="none" stroke="#fff" stroke-width="1.1"/><path d="M11 6Q12.5 8.5 11 11M13.5 4Q16 8.5 13.5 13M16 2Q19.5 8.5 16 15" fill="none" stroke="#fff" stroke-width="1.1"/></svg>
<div class="t" id="reng" style="left:1582.0px;top:1000.0px;font-size:14.0px;color:#fff;transform:scaleX(0.829);transform-origin:0 0">ENG</div>
<div class="t" id="rtime" style="left:1635.5px;top:990.0px;font-size:13.69px;color:#fff;transform:scaleX(0.843);transform-origin:0 0">14:29</div>
<div class="t" id="rdate" style="left:1619.0px;top:1008.0px;font-size:14.01px;color:#fff;transform:scaleX(0.868);transform-origin:0 0">12-12-2022</div>
<svg class="a" style="left:1699px;top:997px" width="18" height="18" viewBox="0 0 18 18"><path d="M1 1.5H17V13.5H11L9 16L7 13.5H1Z" fill="none" stroke="#fff" stroke-width="1.2" stroke-linejoin="round"/></svg>


<div class="a" style="left:0;top:1029px;width:1920px;height:50px;background:#222222"></div>
<div class="a" style="left:60px;top:1029px;width:430px;height:50px;background:#f0f0f0"></div>
<div class="t" id="lsearch" style="left:109.0px;top:1045.0px;font-size:18.89px;color:#2e3238;transform:scaleX(0.993);transform-origin:0 0">Type here to search</div>
<div class="a" style="left:1263px;top:1029px;width:175px;height:50px;background:#3d3d3d"></div>
<div class="a" style="left:917px;top:1076px;width:165px;height:3px;background:#76b9ed"></div>
<div class="a" style="left:1092px;top:1076px;width:166px;height:3px;background:#76b9ed"></div>
<div class="a" style="left:1263px;top:1076px;width:175px;height:3px;background:#76b9ed"></div>
<div class="a" style="left:1914px;top:1029px;width:1px;height:50px;background:#5a5a5a"></div>

<svg class="a" style="left:20px;top:1044px" width="20" height="20" viewBox="0 0 20 20"><path d="M0 2.8L8.2 1.7V9.4H0ZM9.2 1.55L20 0V9.4H9.2ZM0 10.4H8.2V18.3L0 17.2ZM9.2 10.4H20V20L9.2 18.45Z" fill="#fff"/></svg>
<svg class="a" style="left:75px;top:1044px" width="20" height="20" viewBox="0 0 20 20"><circle cx="12.5" cy="7.5" r="5.8" fill="none" stroke="#222" stroke-width="1.6"/><path d="M8.4 11.6L1 19" stroke="#222" stroke-width="1.7"/></svg>
<svg class="a" style="left:400px;top:1029px" width="76" height="50" viewBox="0 0 76 50">
<path d="M39.4 24.1 L19.6 23.3 L4.2 35.7 L24.0 36.5Z" fill="#2f7a2a"/>
<path d="M39.4 24.1 L25.8 15.0 L9.5 15.5 L23.1 24.6Z" fill="#3b8a30"/>
<path d="M39.4 24.1 L58.5 25.4 L70.4 14.4 L54.4 12.1Z" fill="#2f7a2a"/>
<path d="M39.4 24.1 L36.0 12.0 L22.0 7.6 L27.1 21.4Z" fill="#d8301c"/>
<path d="M39.4 24.1 L48.6 17.3 L46.3 4.2 L36.4 13.0Z" fill="#e0341e"/>
<path d="M39.4 24.1 L52.1 21.2 L57.7 7.0 L43.2 11.7Z" fill="#d82c1a"/>
<path d="M39.4 24.1 L28.0 24.8 L23.0 37.0 L36.0 35.0Z" fill="#d02818"/>
<path d="M39.4 24.1 L28.7 30.2 L28.3 44.5 L40.1 36.4Z" fill="#d42a1a"/>
<path d="M39.4 24.1 L44.4 36.5 L59.5 40.3 L52.5 26.3Z" fill="#de321e"/>
<path d="M39.4 24.1 L30.3 15.5 L15.8 18.0 L27.3 27.2Z" fill="#f04030"/>
<path d="M39.4 24.1 L42.9 14.0 L34.3 5.0 L31.3 17.1Z" fill="#f0402c"/>
<path d="M39.4 24.1 L47.4 30.1 L57.0 24.0 L47.3 18.1Z" fill="#ec3a28"/>
<path d="M39.4 24.1 L33.4 33.8 L39.4 45.6 L45.4 33.8Z" fill="#e83424"/>
<path d="M39.4 24.1 L48.8 24.2 L52.0 14.0 L41.3 14.9Z" fill="#f24836"/>
<circle cx="39.4" cy="24.1" r="4" fill="#f0e060"/><circle cx="39.4" cy="24.1" r="2" fill="#d8c030"/>
</svg>
<svg class="a" style="left:510px;top:1044px" width="20" height="20" viewBox="0 0 20 20"><circle cx="10" cy="10" r="8.3" fill="none" stroke="#fff" stroke-width="2.6"/></svg>
<svg class="a" style="left:569px;top:1044px" width="22" height="19" viewBox="0 0 22 20"><g fill="none" stroke="#fff" stroke-width="1.5"><path d="M0 1.5H15M0 18.5H15"/><rect x="2" y="4.5" width="11" height="11"/><path d="M18.5 0V4M18.5 7V13M18.5 16V20"/></g></svg>
<svg class="a" style="left:628px;top:1039px" width="30" height="30" viewBox="0 0 30 30">
<defs><linearGradient id="eg1" x1="0" y1="0" x2="1" y2="1"><stop offset="0" stop-color="#35c1f1"/><stop offset="1" stop-color="#1464c8"/></linearGradient>
<linearGradient id="eg2" x1="0" y1="0" x2="1" y2="0"><stop offset="0" stop-color="#2cb56a"/><stop offset="1" stop-color="#7cd96a"/></linearGradient></defs>
<circle cx="15" cy="15" r="14.5" fill="url(#eg1)"/>
<path d="M3 13Q6 1 17 1Q28 2 29.5 14Q29 20 22 20Q16 20 17 16Q19 12 15 11Q9 10 6 16Z" fill="url(#eg2)"/>
<path d="M8 17Q9 11 15 12Q19 13 17.5 17Q16 21 22 21Q26 21 28 19Q25 29 15 29.5Q7 29 8 17Z" fill="#0c4fa8"/>
<ellipse cx="15.5" cy="16" rx="3.6" ry="3" fill="#1a66c4"/>
</svg>
<svg class="a" style="left:689px;top:1041px" width="28" height="24" viewBox="0 0 28 24"><path d="M1 2.5Q1 1 2.5 1H10L12.5 3.5H25.5Q27 3.5 27 5V21.5Q27 23 25.5 23H2.5Q1 23 1 21.5Z" fill="#e9a920"/><path d="M1 7H27V21.5Q27 23 25.5 23H2.5Q1 23 1 21.5Z" fill="#ffd65c"/><path d="M6 23V15.5Q6 14 7.5 14H20.5Q22 14 22 15.5V23H18.5V17.5H9.5V23Z" fill="#2f8ae0"/><rect x="9.5" y="19" width="9" height="4" fill="#ffd65c"/></svg>
<svg class="a" style="left:748px;top:1040px" width="29" height="29" viewBox="0 0 26 28"><path d="M8 7V4Q8 1.5 10.5 1.5H15.5Q18 1.5 18 4V7" fill="none" stroke="#2ba6e8" stroke-width="2.2"/><rect x="1" y="6" width="24" height="21" rx="3" fill="#f2f2f2"/><rect x="1" y="6" width="24" height="3" rx="1" fill="#fafafa"/><rect x="8" y="11" width="4.6" height="4.6" fill="#f25022"/><rect x="13.4" y="11" width="4.6" height="4.6" fill="#7fba00"/><rect x="8" y="16.4" width="4.6" height="4.6" fill="#00a4ef"/><rect x="13.4" y="16.4" width="4.6" height="4.6" fill="#ffb900"/></svg>
<svg class="a" style="left:808px;top:1040px" width="30" height="28" viewBox="0 0 30 28"><path d="M0 10L15 1L30 10V27H0Z" fill="#0a5fb4"/><path d="M3 9H27V20H3Z" fill="#fff"/><path d="M0 10L15 19L30 10V27H0Z" fill="#1d8ee8"/><path d="M0 27L15 17L30 27Z" fill="#37b1f5"/></svg>
<svg class="a" style="left:868px;top:1038px" width="27" height="30" viewBox="0 0 28 30"><g fill="none" stroke="#fff" stroke-width="1.6" stroke-linejoin="round"><path d="M8 3.5L14 0.8L25 6.5V13M27 10V21L20 25M14 29L3 23V16M1 19V8L8 4.2"/><path d="M14 8L20 11.2V18.5L14 21.8L8 18.5V11.2Z"/><path d="M8 11.2L14 14.5L20 11.2M14 14.5V21.8"/></g></svg>
<svg class="a" style="left:922px;top:1038px" width="32" height="32" viewBox="0 0 30 30">
 <g fill="none" stroke-linejoin="round">
  <rect x="4" y="12.5" width="11" height="11" rx="2" transform="rotate(45 9.5 18)" stroke="#fff" stroke-width="4.5"/>
  <rect x="11" y="12.5" width="11" height="11" rx="2" transform="rotate(45 16.5 18)" stroke="#fff" stroke-width="4.5"/>
  <circle cx="13.5" cy="5" r="2.8" stroke="#fff" stroke-width="4"/>
  <rect x="4" y="12.5" width="11" height="11" rx="2" transform="rotate(45 9.5 18)" stroke="#2a64c8" stroke-width="1.8"/>
  <rect x="11" y="12.5" width="11" height="11" rx="2" transform="rotate(45 16.5 18)" fill="#fff" stroke="#1c9c3a" stroke-width="1.8"/>
  <circle cx="13.5" cy="5" r="2.6" fill="#fff" stroke="#1c9c3a" stroke-width="1.8"/>
 </g></svg>
<div class="t" id="lb1" style="left:957.0px;top:1047.5px;font-size:15.58px;color:#fff;transform:scaleX(0.913);transform-origin:0 0">Frida In-Session ...</div>
<svg class="a" style="left:1098px;top:1038px" width="32" height="32" viewBox="0 0 30 30">
 <g fill="none" stroke-linejoin="round">
  <rect x="4" y="12.5" width="11" height="11" rx="2" transform="rotate(45 9.5 18)" stroke="#fff" stroke-width="4.5"/>
  <rect x="11" y="12.5" width="11" height="11" rx="2" transform="rotate(45 16.5 18)" stroke="#fff" stroke-width="4.5"/>
  <circle cx="13.5" cy="5" r="2.8" stroke="#fff" stroke-width="4"/>
  <rect x="4" y="12.5" width="11" height="11" rx="2" transform="rotate(45 9.5 18)" stroke="#2a64c8" stroke-width="1.8"/>
  <rect x="11" y="12.5" width="11" height="11" rx="2" transform="rotate(45 16.5 18)" fill="#fff" stroke="#1c9c3a" stroke-width="1.8"/>
  <circle cx="13.5" cy="5" r="2.6" fill="#fff" stroke="#1c9c3a" stroke-width="1.8"/>
 </g></svg>
<div class="t" id="lb2" style="left:1132.0px;top:1047.5px;font-size:15.58px;color:#fff;transform:scaleX(0.964);transform-origin:0 0">Files &amp;&amp; Folders</div>
<svg class="a" style="left:1274px;top:1038px" width="32" height="32" viewBox="0 0 30 30">
 <g fill="none" stroke-linejoin="round">
  <rect x="4" y="12.5" width="11" height="11" rx="2" transform="rotate(45 9.5 18)" stroke="#fff" stroke-width="4.5"/>
  <rect x="11" y="12.5" width="11" height="11" rx="2" transform="rotate(45 16.5 18)" stroke="#fff" stroke-width="4.5"/>
  <circle cx="13.5" cy="5" r="2.8" stroke="#fff" stroke-width="4"/>
  <rect x="4" y="12.5" width="11" height="11" rx="2" transform="rotate(45 9.5 18)" stroke="#2a64c8" stroke-width="1.8"/>
  <rect x="11" y="12.5" width="11" height="11" rx="2" transform="rotate(45 16.5 18)" fill="#fff" stroke="#1c9c3a" stroke-width="1.8"/>
  <circle cx="13.5" cy="5" r="2.6" fill="#fff" stroke="#1c9c3a" stroke-width="1.8"/>
 </g></svg>
<div class="t" id="lb3" style="left:1308.0px;top:1047.5px;font-size:15.58px;color:#fff;transform:scaleX(0.911);transform-origin:0 0">File Transfer - 5...</div>

<svg class="a" style="left:1457px;top:1040px" width="32" height="30" viewBox="0 0 32 30"><ellipse cx="16" cy="12" rx="11" ry="9" fill="#dfe6f5"/><ellipse cx="8" cy="15" rx="7" ry="6" fill="#eef2fb"/><ellipse cx="24" cy="15" rx="7" ry="6" fill="#c6d2ee"/><path d="M7 21L5 27M14 21L12 28M21 21L19 27" stroke="#3060e8" stroke-width="3.5" stroke-linecap="round"/></svg>
<div class="t" id="lhea" style="left:1497.0px;top:1046.0px;font-size:18.83px;color:#fff;transform:scaleX(0.907);transform-origin:0 0">Hea...</div>
<svg class="a" style="left:1573px;top:1049px" width="18" height="11" viewBox="0 0 18 11"><path d="M1 10L9 2L17 10" fill="none" stroke="#fff" stroke-width="1.5"/></svg>
<svg class="a" style="left:1601px;top:1043px" width="23" height="22" viewBox="0 0 23 22"><path d="M1 4L20 1.5V18L1 19.5Z" fill="none" stroke="#fff" stroke-width="1.4"/><path d="M7 10Q7 6.5 11 6.5H13M11 13.5H8.5" fill="none" stroke="#fff" stroke-width="1.2"/><circle cx="16.5" cy="17.5" r="4" fill="#2d7ad6"/></svg>
<svg class="a" style="left:1632px;top:1049px" width="21" height="12" viewBox="0 0 21 12"><rect x="0.8" y="0.8" width="17" height="10.4" fill="none" stroke="#fff" stroke-width="1.5"/><rect x="2.8" y="2.8" width="13" height="6.4" fill="#fff"/><rect x="18.5" y="3.5" width="2" height="5" fill="#fff"/></svg>
<svg class="a" style="left:1665px;top:1046px" width="18" height="17" viewBox="0 0 18 17"><g fill="none" stroke="#fff" stroke-width="1.3"><path d="M1 16A15 15 0 0 1 16 1"/><path d="M4.5 16A11.5 11.5 0 0 1 16 4.5"/><path d="M8 16A8 8 0 0 1 16 8"/></g><circle cx="14.5" cy="14.5" r="1.6" fill="#fff"/></svg>
<svg class="a" style="left:1691px;top:1044px" width="23" height="21" viewBox="0 0 23 21"><path d="M1 7H5L10.5 1.5V19.5L5 14H1Z" fill="none" stroke="#fff" stroke-width="1.3"/><path d="M13.5 7.5Q15 10.5 13.5 13.5M16.5 5Q19 10.5 16.5 16M19.5 2.5Q23.5 10.5 19.5 18.5" fill="none" stroke="#fff" stroke-width="1.3"/></svg>
<div class="t" id="leng" style="left:1725.0px;top:1046.0px;font-size:15.15px;color:#fff;transform:scaleX(0.894);transform-origin:0 0">ENG</div>
<div class="t" id="ltime" style="left:1790.0px;top:1035.0px;font-size:16.36px;color:#fff;transform:scaleX(0.86);transform-origin:0 0">14:29</div>
<div class="t" id="ldate" style="left:1770.0px;top:1057.0px;font-size:15.29px;color:#fff;transform:scaleX(0.965);transform-origin:0 0">12-12-2022</div>
<svg class="a" style="left:1868px;top:1043px" width="33" height="30" viewBox="0 0 33 30"><path d="M1 1H25V20H11L6 24V20H1Z" fill="#fff"/><path d="M5 6H21M5 10H21M5 14H15" stroke="#202020" stroke-width="1.6"/><circle cx="24" cy="21" r="8.2" fill="#2b2b2b" stroke="#8a8a8a" stroke-width="0.9"/><text x="24" y="26" font-family="Liberation Sans" font-size="13" fill="#fff" text-anchor="middle">4</text></svg>
<!--/TASKBARS-->

<!--LTASKBAR-->

</body></html>
